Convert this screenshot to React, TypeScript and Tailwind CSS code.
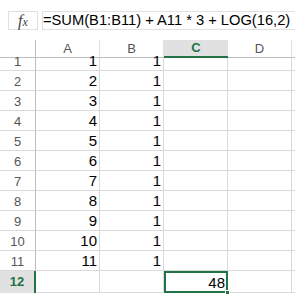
import React from 'react';

const cols = ['A', 'B', 'C', 'D'];
const rows = Array.from({ length: 11 }, (_, i) => i + 1);

const App = () => {
  return (
    <div className="w-[295px] h-[295px] overflow-hidden bg-white font-['Liberation_Sans',Arial,sans-serif]">
      {/* formula bar */}
      <div className="h-[40px] flex items-start pt-[11px] pl-[8px] gap-[4px]">
        <div className="shrink-0 w-[30px] h-[19px] border border-[#e0e0e0] flex items-center justify-center text-[#444] italic text-[16px] leading-none font-['Liberation_Serif',serif]">
          f<span className="text-[12px] mt-[3px]">x</span>
        </div>
        <div className="flex-1 min-w-0 h-[19px] border border-[#e0e0e0] border-r-0 flex items-center text-[14.7px] text-black whitespace-nowrap">
          =SUM(B1:B11) + A11 * 3 + LOG(16,2)
        </div>
      </div>

      {/* grid */}
      <div className="grid grid-cols-[36px_64px_64px_64px_64px_1fr] text-[13px]">
        {/* header row */}
        <div className="h-[18px] border-r border-b border-[#bdbdbd]" />
        {cols.map((c) =>
          c === 'C' ? (
            <div key={c} className="h-[18px] bg-[#e1e1e1] border-b-2 border-[#217346] flex items-center justify-center text-[#217346] font-bold">
              {c}
            </div>
          ) : (
            <div key={c} className="h-[18px] border-r border-b border-r-[#e0e0e0] border-b-[#bdbdbd] flex items-center justify-center text-[#555]">
              {c}
            </div>
          )
        )}
        <div className="h-[18px] border-b border-[#bdbdbd]" />

        {/* data rows */}
        {rows.map((r) => (
          <React.Fragment key={r}>
            <div className={`${r === 1 ? 'h-[13px]' : 'h-[20px]'} border-r border-b border-r-[#bdbdbd] border-b-[#d9d9d9] flex items-end justify-center pb-[2px] text-[#555] leading-none`}>
              {r}
            </div>
            <div className={`${r === 1 ? 'h-[13px]' : 'h-[20px]'} border-r border-b border-[#d9d9d9] flex items-end justify-end pr-[2px] pb-[2px] text-black text-[15px] leading-none`}>
              {r}
            </div>
            <div className={`${r === 1 ? 'h-[13px]' : 'h-[20px]'} border-r border-b border-[#d9d9d9] flex items-end justify-end pr-[2px] pb-[2px] text-black text-[15px] leading-none`}>
              1
            </div>
            <div className={`${r === 1 ? 'h-[13px]' : 'h-[20px]'} border-r border-b border-[#d9d9d9]`} />
            <div className={`${r === 1 ? 'h-[13px]' : 'h-[20px]'} border-r border-b border-[#d9d9d9]`} />
            <div className={`${r === 1 ? 'h-[13px]' : 'h-[20px]'} border-b border-[#d9d9d9]`} />
          </React.Fragment>
        ))}

        {/* row 12 */}
        <div className="h-[22px] bg-[#e1e1e1] border-r-2 border-[#217346] flex items-center justify-center text-[#217346] font-bold">
          12
        </div>
        <div className="h-[22px] border-r border-b border-[#d9d9d9]" />
        <div className="h-[22px] border-r border-b border-[#d9d9d9]" />
        <div className="relative h-[22px] border-2 border-[#217346] flex items-end justify-end pr-[1px] pb-[1px] text-black text-[15px] leading-none">
          48
          <div className="absolute right-[-4px] bottom-[-4px] w-[5px] h-[5px] bg-[#217346] border border-white" />
        </div>
        <div className="h-[22px] border-r border-b border-[#d9d9d9]" />
        <div className="h-[22px] border-b border-[#d9d9d9]" />
      </div>
    </div>
  );
};

export default App;
